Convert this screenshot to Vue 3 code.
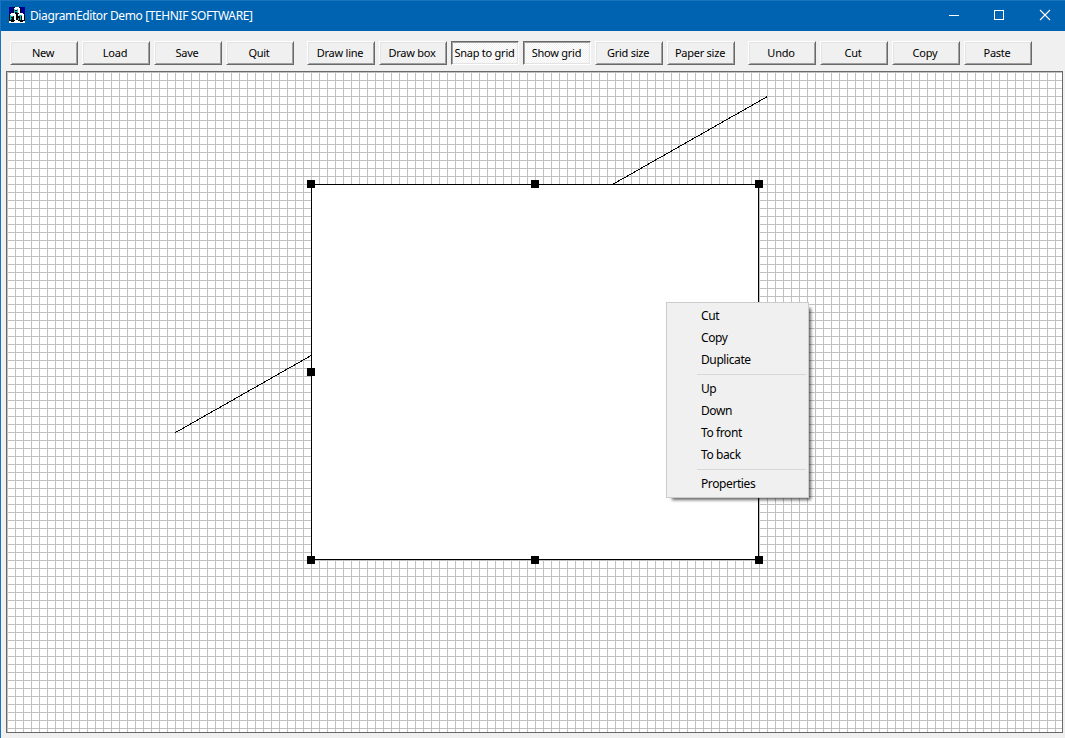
<template>
  <div class="window">
    <header class="titlebar">
      <svg class="app-icon" width="16" height="16" viewBox="0 0 16 16" shape-rendering="crispEdges">
        <rect width="16" height="16" fill="#000" />
        <path d="M0 0h5v2h-1v4h-1v1h-2v1h-1zM11 0h5v8h-1v-1h-2v-1h-1v-4h-1z" fill="#000090" />
        <path d="M6 0h4v1h1v2h-6v-2h1zM2 6h4v1h1v2h-6v-2h1zM10 6h4v1h1v2h-6v-2h1z" fill="#fff" />
        <path d="M9 3h2v3h-2zM5 9h2v4h-2zM13 9h2v4h-2z" fill="#fff" />
        <path d="M5 2h1v4h-1zM8 2h1v4h-1zM6 4h2v1h-2zM1 8h1v5h-1zM2 9h2v1h-2zM2 11h1v1h-1zM10 8h3v1h-3zM11 9h1v4h-1zM9 11h1v2h-1z" fill="#00c0c0" />
        <path d="M0 14h2v1h3v-1h1v-1h3v1h2v1h3v-1h2v2h-16z" fill="#fff" />
      </svg>
      <span class="title">DiagramEditor Demo [TEHNIF SOFTWARE]</span>
      <div class="window-controls">
        <svg width="46" height="31" shape-rendering="crispEdges">
          <path d="M18 15.5h10" stroke="#fff" />
        </svg>
        <svg width="46" height="31" shape-rendering="crispEdges">
          <rect x="17.5" y="10.5" width="9" height="9" fill="none" stroke="#fff" />
        </svg>
        <svg width="42" height="31">
          <path d="M17 10l10 10M27 10l-10 10" stroke="#fff" stroke-width="1.1" />
        </svg>
      </div>
    </header>

    <nav class="toolbar">
      <div v-for="(group, i) in groups" :key="i" class="group">
        <button
          v-for="name in group"
          :key="name"
          type="button"
          :class="{ pressed: toggles[name] }"
          @click="onButton(name)"
        >
          <span>{{ name }}</span>
        </button>
      </div>
    </nav>

    <main class="paper" :class="{ grid: toggles['Show grid'] }">
      <svg class="diagram" width="1055" height="660" shape-rendering="crispEdges">
        <path d="M168.5 360.5L760.5 24.5" stroke="#000" />
        <rect x="304.5" y="112.5" width="447" height="375" fill="#fff" stroke="#000" />
        <rect
          v-for="h in handles"
          :key="`${h.x}-${h.y}`"
          :x="h.x - 4"
          :y="h.y - 4"
          width="8"
          height="8"
        />
      </svg>
    </main>

    <ul class="menu">
      <template v-for="(section, i) in menu" :key="i">
        <li v-if="i > 0" class="separator"></li>
        <li v-for="item in section" :key="item" class="item">{{ item }}</li>
      </template>
    </ul>
  </div>
</template>

<script setup>
import { reactive } from 'vue'

const groups = [
  ['New', 'Load', 'Save', 'Quit'],
  ['Draw line', 'Draw box', 'Snap to grid', 'Show grid', 'Grid size', 'Paper size'],
  ['Undo', 'Cut', 'Copy', 'Paste']
]

const menu = [
  ['Cut', 'Copy', 'Duplicate'],
  ['Up', 'Down', 'To front', 'To back'],
  ['Properties']
]

const toggles = reactive({ 'Snap to grid': true, 'Show grid': true })

const handles = [
  { x: 304, y: 112 },
  { x: 528, y: 112 },
  { x: 752, y: 112 },
  { x: 304, y: 300 },
  { x: 752, y: 300 },
  { x: 304, y: 488 },
  { x: 528, y: 488 },
  { x: 752, y: 488 }
]

const onButton = (name) => {
  if (name in toggles) {
    toggles[name] = !toggles[name]
  }
}
</script>

<style>
body {
  margin: 0;
  overflow: hidden;
}
</style>

<style scoped>
.window {
  position: relative;
  box-sizing: border-box;
  width: 1065px;
  height: 738px;
  border-left: 1px solid #1a73bc;
  background: #f0f0f0;
  color: #000;
  font-family: "Noto Sans", "Open Sans", sans-serif;
}

.titlebar {
  display: flex;
  align-items: center;
  box-sizing: border-box;
  height: 31px;
  padding-left: 8px;
  border-top: 1px solid #1a73bc;
  background: #0063b1;
  color: #fff;
}

.app-icon {
  margin-right: 5px;
  margin-bottom: 2px;
}

.title {
  padding-bottom: 2px;
  font-size: 12px;
  letter-spacing: -0.39px;
  white-space: nowrap;
}

.window-controls {
  display: flex;
  height: 31px;
  margin-top: -1px;
  margin-left: auto;
}

.toolbar {
  display: flex;
  gap: 13px;
  height: 24px;
  padding: 10px 0 6px 9px;
}

.group {
  display: flex;
  gap: 4px;
}

button {
  display: flex;
  align-items: center;
  justify-content: center;
  width: 68px;
  height: 24px;
  padding: 0 2px 2px 0;
  border: 1px solid;
  border-color: #fff #696969 #696969 #fff;
  border-radius: 0;
  background: #f0f0f0;
  box-shadow: inset 1px 1px #e3e3e3, inset -1px -1px #a0a0a0;
  color: #000;
  font-family: inherit;
  font-size: 11px;
  letter-spacing: -0.25px;
  white-space: nowrap;
}

button.pressed {
  padding-right: 1px;
  border-color: #696969 #fff #fff #696969;
  background: repeating-conic-gradient(#fff 0 25%, #f0f0f0 0 50%) 0 0 / 2px 2px;
  box-shadow: inset 1px 1px #a0a0a0, inset -1px -1px #e3e3e3;
}

.paper {
  width: 1055px;
  height: 660px;
  margin-left: 5px;
  border: 1px solid #696969;
  background-color: #fff;
}

.paper.grid {
  background-image:
    linear-gradient(to right, #c0c0c0 1px, transparent 1px),
    linear-gradient(to bottom, #c0c0c0 1px, transparent 1px);
  background-size: 8px 8px;
}

.diagram {
  display: block;
}

.menu {
  position: absolute;
  top: 302px;
  left: 665px;
  box-sizing: border-box;
  width: 143px;
  margin: 0;
  padding: 2px;
  border: 1px solid #ccc;
  background: #f0f0f0;
  box-shadow: 4px 4px 3px -2px rgba(0, 0, 0, 0.6);
  font-size: 12px;
  letter-spacing: -0.4px;
  list-style: none;
}

.item {
  height: 22px;
  padding-left: 32px;
  line-height: 22px;
}

.separator {
  height: 1px;
  margin: 3px 0 3px 28px;
  background: #d7d7d7;
}
</style>
